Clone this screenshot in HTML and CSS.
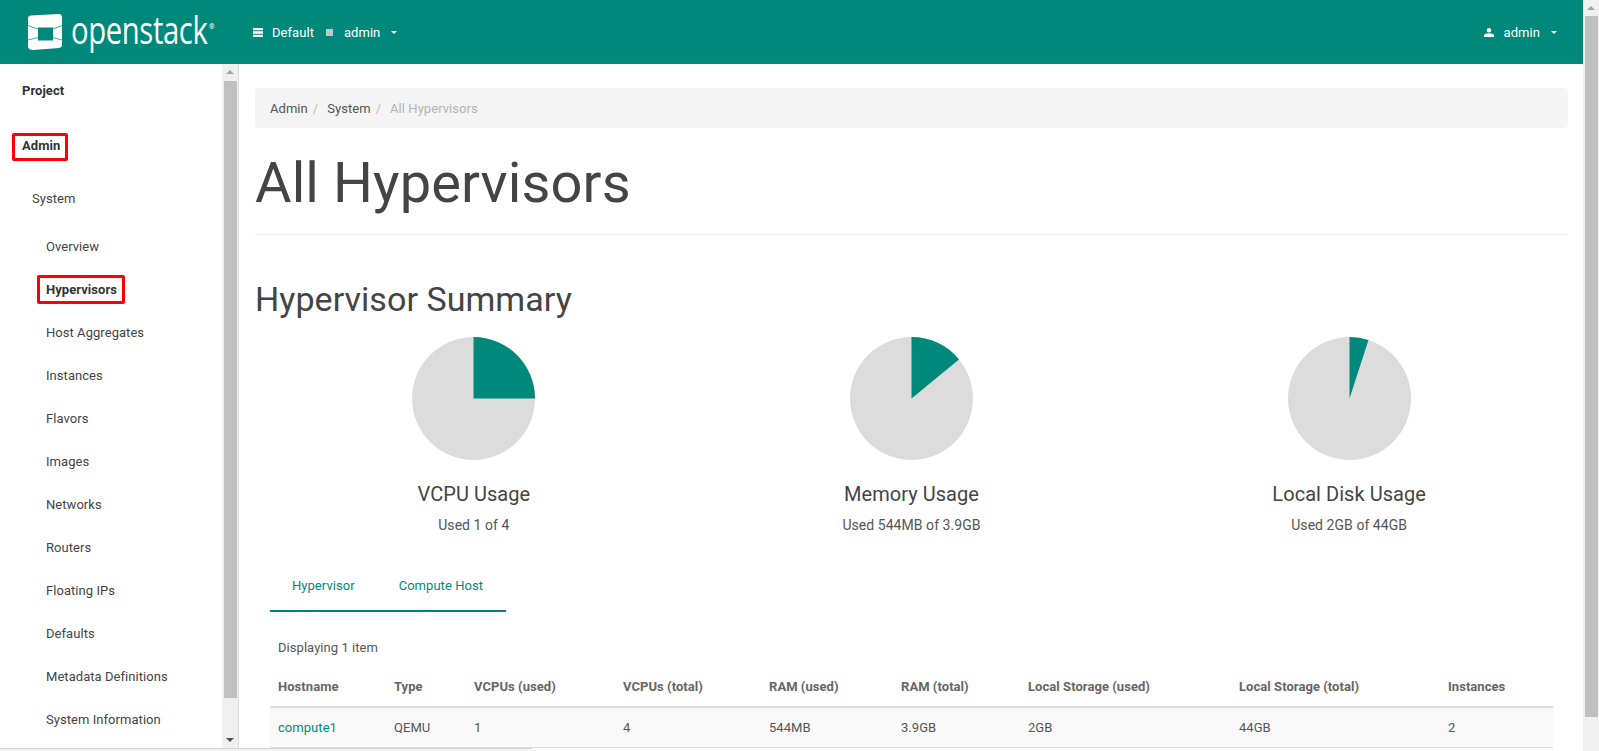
FILE: index.html
```html
<!DOCTYPE html>
<html lang="en">
<head>
<meta charset="utf-8">
<title>All Hypervisors</title>
<link rel="stylesheet" href="styles.css">
</head>
<body>
<div class="app">
  <header class="topbar">
    <a class="logo">
      <svg class="logo-cube" viewBox="0 0 34 36" width="34" height="36" aria-hidden="true">
        <path fill="#fff" fill-rule="evenodd" d="M3 1.500 31 0c1.600 0 3 1.300 3 3v28c0 1.600-1.300 2.600-3 3L5 36c-2.500 0-5-1.500-5-3V4c0-1.500 1.500-2.500 3-2.500ZM10 13.500v13h15v-13Z"/>
        <path fill="none" stroke="#00897b" stroke-width="0.7" d="M0 11.500 10 15M34 11.500 25 15M0 26 10 23.500M34 26 25 23.500"/>
      </svg>
      <span class="logo-word">openstack</span><span class="logo-reg">®</span>
    </a>
    <div class="scope">
      <svg class="ico-server" viewBox="0 0 10 9" width="10" height="9" aria-hidden="true"><path fill="#fff" d="M0 0h10v2.300H0zM0 3.300h10v2.400H0zM0 6.700h10V9H0z"/></svg>
      <span class="scope-name">Default</span>
      <span class="scope-sep"></span>
      <span class="scope-name">admin</span>
      <span class="caret"></span>
    </div>
    <div class="user">
      <svg class="ico-user" viewBox="0 0 10 9" width="10" height="9" aria-hidden="true"><circle cx="5" cy="2.200" r="2.200" fill="#fff"/><path fill="#fff" d="M0 9V7.300C0 6 2.500 5.200 5 5.200S10 6 10 7.300V9Z"/></svg>
      <span class="scope-name">admin</span>
      <span class="caret caret-user"></span>
    </div>
  </header>
  <div class="main">
    <nav class="sidebar">
      <div class="nav-top nav-project">Project</div>
      <div class="nav-top nav-admin"><span class="mark mark-admin">Admin</span></div>
      <div class="nav-group">System</div>
      <ul class="nav-list">
        <li>Overview</li>
        <li class="active"><span class="mark mark-hyper">Hypervisors</span></li>
        <li>Host Aggregates</li>
        <li>Instances</li>
        <li>Flavors</li>
        <li>Images</li>
        <li>Networks</li>
        <li>Routers</li>
        <li>Floating IPs</li>
        <li>Defaults</li>
        <li>Metadata Definitions</li>
        <li>System Information</li>
      </ul>
    </nav>
    <div class="side-scroll">
      <span class="arrow-up"></span>
      <span class="side-thumb"></span>
      <span class="arrow-down"></span>
    </div>
    <main class="content">
      <ol class="breadcrumb">
        <li>Admin</li>
        <li class="sep">/</li>
        <li>System</li>
        <li class="sep">/</li>
        <li class="current">All Hypervisors</li>
      </ol>
      <h1 class="page-title">All Hypervisors</h1>
      <h2 class="section-title">Hypervisor Summary</h2>
      <div class="charts">
        <figure class="chart">
          <svg class="pie" viewBox="0 0 123 123" width="123" height="123" aria-hidden="true">
            <circle cx="61.500" cy="61.500" r="61.500" fill="#dcdcdc"/>
            <path fill="#00897b" d="M61.500 61.500V0A61.500 61.500 0 0 1 123 61.500Z"/>
          </svg>
          <figcaption><div class="chart-title">VCPU Usage</div><div class="chart-sub">Used 1 of 4</div></figcaption>
        </figure>
        <figure class="chart">
          <svg class="pie" viewBox="0 0 123 123" width="123" height="123" aria-hidden="true">
            <circle cx="61.500" cy="61.500" r="61.500" fill="#dcdcdc"/>
            <path fill="#00897b" d="M61.500 61.500V0A61.500 61.500 0 0 1 109 22.400Z"/>
          </svg>
          <figcaption><div class="chart-title">Memory Usage</div><div class="chart-sub">Used 544MB of 3.9GB</div></figcaption>
        </figure>
        <figure class="chart">
          <svg class="pie" viewBox="0 0 123 123" width="123" height="123" aria-hidden="true">
            <circle cx="61.500" cy="61.500" r="61.500" fill="#dcdcdc"/>
            <path fill="#00897b" d="M61.500 61.500V0A61.500 61.500 0 0 1 80.500 3Z"/>
          </svg>
          <figcaption><div class="chart-title">Local Disk Usage</div><div class="chart-sub">Used 2GB of 44GB</div></figcaption>
        </figure>
      </div>
      <section class="panel">
        <ul class="tabs">
          <li>Hypervisor</li>
          <li>Compute Host</li>
        </ul>
        <div class="count">Displaying 1 item</div>
        <table class="grid">
          <colgroup>
            <col class="c1"><col class="c2"><col class="c3"><col class="c4"><col class="c5"><col class="c6"><col class="c7"><col class="c8"><col class="c9">
          </colgroup>
          <thead>
            <tr><th>Hostname</th><th>Type</th><th>VCPUs (used)</th><th>VCPUs (total)</th><th>RAM (used)</th><th>RAM (total)</th><th>Local Storage (used)</th><th>Local Storage (total)</th><th>Instances</th></tr>
          </thead>
          <tbody>
            <tr><td class="link">compute1</td><td>QEMU</td><td>1</td><td>4</td><td>544MB</td><td>3.9GB</td><td>2GB</td><td>44GB</td><td>2</td></tr>
          </tbody>
        </table>
      </section>
    </main>
  </div>
  <div class="hbar"><span class="hbar-thumb"></span></div>
</div>
<div class="page-scroll">
  <span class="arrow-up"></span>
  <span class="page-thumb"></span>
</div>
</body>
</html>
```
FILE: styles.css
```css
* { box-sizing: border-box; }
html, body { height: 100%; }
body {
  margin: 0;
  display: flex;
  overflow: hidden;
  background: #fff;
  font-family: Roboto, "Liberation Sans", sans-serif;
  font-size: 13px;
  line-height: 18px;
  letter-spacing: 0.05px;
  color: #555;
}
.app {
  flex: 1 1 auto;
  min-width: 0;
  display: flex;
  flex-direction: column;
  height: 751px;
}

/* top bar */
.topbar {
  flex: 0 0 64px;
  display: flex;
  align-items: center;
  background: #00897b;
  color: #fff;
  padding-left: 28px;
}
.logo {
  display: flex;
  align-items: center;
  width: 225px;
  flex: none;
}
.logo-cube { flex: none; }
.logo-word {
  display: inline-block;
  margin-left: 9px;
  font-family: "Open Sans", sans-serif;
  font-weight: 400;
  font-size: 38px;
  line-height: 40px;
  letter-spacing: -0.5px;
  width: 137px;
  transform: translateY(-3px) scaleX(0.77);
  transform-origin: left center;
  white-space: nowrap;
}
.logo-reg {
  font-size: 7px;
  line-height: 7px;
  align-self: flex-start;
  margin: 12px 0 0 1px;
}
.scope { display: flex; align-items: center; }
.scope .ico-server { margin-right: 9px; }
.scope-name { margin-top: 1px; }
.scope-sep {
  width: 7px;
  height: 7px;
  margin: 0 11px 0 12px;
  background: #bcc9c7;
}
.caret {
  width: 0;
  height: 0;
  margin-left: 11px;
  border-left: 3.500px solid transparent;
  border-right: 3.500px solid transparent;
  border-top: 3.500px solid #fff;
}
.user { margin-left: auto; margin-right: 26px; display: flex; align-items: center; }
.user .ico-user { margin-right: 10px; }
.caret-user { margin-left: 11px; }

/* body row */
.main {
  flex: 1 1 0;
  min-height: 0;
  display: flex;
  overflow: hidden;
}
.sidebar {
  flex: 0 0 222px;
  color: #444;
  padding-top: 5px;
}
.nav-top {
  height: 44px;
  line-height: 44px;
  padding-left: 22px;
  font-weight: 700;
  color: #333;
}
.nav-admin { margin-top: 11px; }
.mark {
  display: inline-block;
  border: 3px solid #f00;
  border-radius: 2px;
}
.mark-admin {
  line-height: 20px;
  margin-left: -10px;
  padding: 0 5px 2px 7px;
}
.mark-hyper {
  line-height: 23px;
  margin-left: -9px;
  padding: 0 5px 0 6px;
}
.nav-group {
  height: 44px;
  line-height: 44px;
  margin-top: 9px;
  padding-left: 32px;
}
.nav-list {
  list-style: none;
  margin: 4px 0 0;
  padding: 0;
}
.nav-list li {
  height: 43px;
  line-height: 43px;
  padding-left: 46px;
}
.nav-list .active { font-weight: 700; color: #333; }
.side-scroll {
  flex: 0 0 17px;
  display: flex;
  flex-direction: column;
  align-items: center;
  background: #f0f0f0;
  border-right: 1px solid #ddd;
  margin-right: 1px;
  padding: 6px 0;
}
.side-thumb {
  flex: 0 0 617px;
  width: 13px;
  margin-top: 7px;
  margin-bottom: 40px;
  background: #c0c0c0;
}
.arrow-up, .arrow-down {
  flex: none;
  width: 0;
  height: 0;
  border-left: 4px solid transparent;
  border-right: 4px solid transparent;
}
.arrow-up { border-bottom: 4px solid #a3a3a3; }
.arrow-down { border-top: 4px solid #505050; }

/* content */
.content {
  flex: 1 1 0;
  min-width: 0;
  padding: 24px 15px 0;
  overflow: hidden;
}
.breadcrumb {
  list-style: none;
  display: flex;
  margin: 0;
  padding: 1px 15px 0;
  height: 40px;
  align-items: center;
  background: #f4f4f4;
  border-radius: 4px;
  color: #555;
}
.breadcrumb .sep { color: #bbb; margin: 0 9px 0 5px; }
.breadcrumb .current { color: #b5b5b5; }
.page-title {
  margin: 0;
  height: 107px;
  padding-top: 24px;
  font-size: 56px;
  line-height: 62px;
  font-weight: 400;
  letter-spacing: 0.1px;
  color: #444;
  border-bottom: 1px solid #eee;
}
.section-title {
  margin: 39px 0 0;
  font-size: 34px;
  line-height: 50px;
  font-weight: 400;
  color: #444;
}
.charts {
  display: grid;
  grid-template-columns: repeat(3, 1fr);
  margin-top: 13px;
}
.chart { margin: 0; text-align: center; }
.pie { display: block; margin: 0 auto; }
.chart-title {
  margin-top: 20px;
  font-size: 20px;
  line-height: 28px;
  color: #444;
}
.chart-sub { margin-top: 8px; font-size: 14px; color: #555; }

.panel { margin: 0 15px; }
.tabs {
  list-style: none;
  display: flex;
  width: 236px;
  margin: 27px 0 0;
  padding: 0;
  border-bottom: 2px solid #00897b;
  color: #00897b;
}
.tabs li { padding: 16px 22px 0; line-height: 18px; height: 49px; }
.count { margin-top: 27px; padding-left: 8px; }
.grid {
  width: 100%;
  table-layout: fixed;
  border-collapse: collapse;
  margin-top: 10px;
}
.c1 { width: 116px; }
.c2 { width: 80px; }
.c3 { width: 149px; }
.c4 { width: 146px; }
.c5 { width: 132px; }
.c6 { width: 127px; }
.c7 { width: 211px; }
.c8 { width: 209px; }
.c9 { width: 113px; }
.grid th, .grid td {
  padding: 0 8px;
  text-align: left;
  white-space: nowrap;
}
.grid th {
  height: 40px;
  font-weight: 700;
  color: #666;
  border-bottom: 2px solid #ddd;
}
.grid td {
  height: 40px;
  padding-top: 2px;
  background: #f9f9f9;
  border-bottom: 1px solid #ddd;
}
.link { color: #00897b; }

/* scrollbars */
.hbar { flex: 0 0 3px; }
.hbar-thumb {
  display: block;
  width: 532px;
  height: 3px;
  background: #f1f1f1;
  border-top: 1px solid #d4d4d4;
}
.page-scroll {
  flex: 0 0 16px;
  display: flex;
  flex-direction: column;
  align-items: center;
  background: #f0f0f0;
  padding-top: 6px;
}
.page-thumb {
  width: 13px;
  height: 701px;
  margin-top: 6px;
  background: #c0c0c0;
}
```
